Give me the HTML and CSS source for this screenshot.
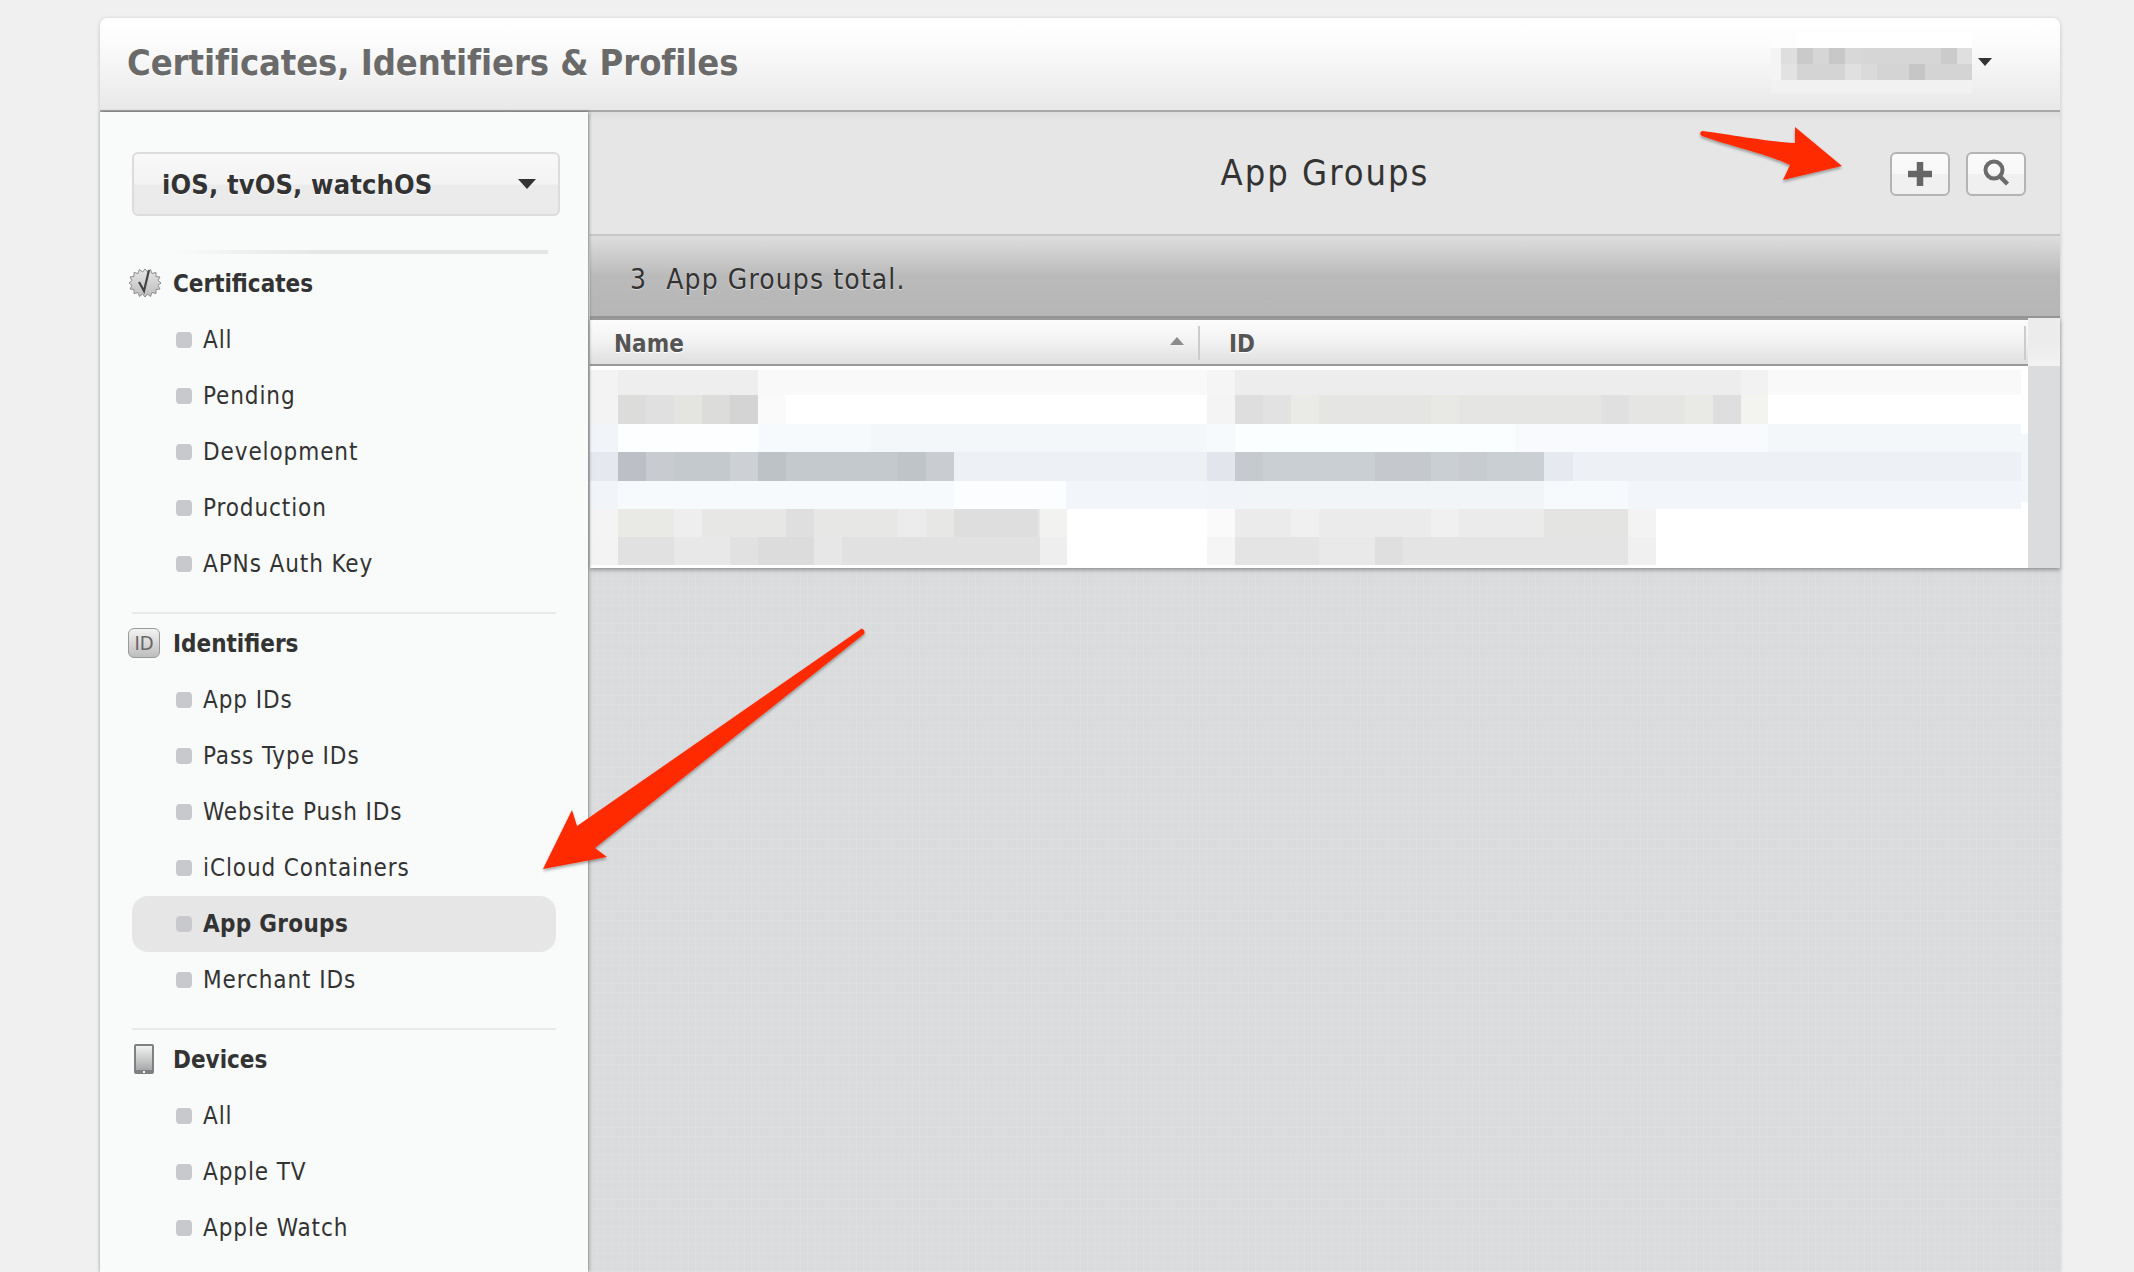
FILE: index.html
```html
<!DOCTYPE html>
<html lang="en">
<head>
  <meta charset="UTF-8">
  <title>Certificates, Identifiers &amp; Profiles</title>
  <link rel="stylesheet" href="styles.css">
</head>
<body>
  <div class="app">
    <header class="topbar">
      <h1>Certificates, Identifiers &amp; Profiles</h1>
      <div class="account">
        <svg class="user-blur" width="201" height="61" viewBox="1771 32 201 61" shape-rendering="crispEdges">
          <rect x="1771" y="32" width="201" height="16" fill="#fdfdfd"/>
          <rect x="1797" y="32" width="175" height="16" fill="#ffffff"/>
          <rect x="1771" y="48" width="10" height="32" fill="#f4f4f4"/>
          <rect x="1781" y="48" width="191" height="16" fill="#d6d6d6"/>
          <rect x="1781" y="48" width="16" height="16" fill="#dedede"/>
          <rect x="1797" y="48" width="16" height="16" fill="#cacaca"/>
          <rect x="1829" y="48" width="16" height="16" fill="#c8c8c8"/>
          <rect x="1845" y="48" width="16" height="16" fill="#d8d8d8"/>
          <rect x="1941" y="48" width="16" height="16" fill="#cbcbcb"/>
          <rect x="1957" y="48" width="15" height="16" fill="#dfdfdf"/>
          <rect x="1781" y="64" width="191" height="16" fill="#d4d4d4"/>
          <rect x="1781" y="64" width="16" height="16" fill="#e2e2e2"/>
          <rect x="1845" y="64" width="16" height="16" fill="#e0e0e0"/>
          <rect x="1861" y="64" width="16" height="16" fill="#dadada"/>
          <rect x="1909" y="64" width="16" height="16" fill="#c6c6c6"/>
          <rect x="1771" y="80" width="201" height="13" fill="#f1f1f1"/>
        </svg>
        <span class="caret caret-small"></span>
      </div>
    </header>

    <div class="content">
      <nav class="sidebar">
        <div class="platform">
          <span>iOS, tvOS, watchOS</span>
          <span class="caret"></span>
        </div>
        <div class="fade-rule"></div>

        <section class="group">
          <h2 class="group-title">
            <svg class="group-icon" width="32" height="32" viewBox="0 0 32 32">
              <defs>
                <linearGradient id="badge" x1="0" y1="0" x2="0" y2="1">
                  <stop offset="0" stop-color="#e6e6e6"/>
                  <stop offset="1" stop-color="#bdbdbd"/>
                </linearGradient>
              </defs>
              <polygon points="16,2 18.500,5 21.500,2.500 23,6.500 27,5.500 27,9.500 31,10 29,13.500 32,16 29,18.500 31,22 27,22.500 27,26.500 23,25.500 21.500,29.500 18.500,27 16,30 13.500,27 10.500,29.500 9,25.500 5,26.500 5,22.500 1,22 3,18.500 0,16 3,13.500 1,10 5,9.500 5,5.500 9,6.500 10.500,2.500 13.500,5" fill="url(#badge)" stroke="#8c8c8c" stroke-width="1"/>
              <path d="M10 15 L15 24 L20 3" fill="none" stroke="#444" stroke-width="2.200"/>
            </svg>
            Certificates
          </h2>
          <ul class="links">
            <li>All</li>
            <li>Pending</li>
            <li>Development</li>
            <li>Production</li>
            <li>APNs Auth Key</li>
          </ul>
        </section>

        <section class="group">
          <h2 class="group-title">
            <span class="id-badge">ID</span>
            Identifiers
          </h2>
          <ul class="links">
            <li>App IDs</li>
            <li>Pass Type IDs</li>
            <li>Website Push IDs</li>
            <li>iCloud Containers</li>
            <li class="active">App Groups</li>
            <li>Merchant IDs</li>
          </ul>
        </section>

        <section class="group">
          <h2 class="group-title">
            <svg class="group-icon" width="32" height="32" viewBox="0 0 32 32">
              <defs>
                <linearGradient id="screen" x1="0" y1="0" x2="0" y2="1">
                  <stop offset="0" stop-color="#f2f2f2"/>
                  <stop offset="1" stop-color="#a9a9a9"/>
                </linearGradient>
              </defs>
              <rect x="5" y="1" width="20" height="30" rx="2" fill="#7f8084"/>
              <rect x="7" y="3" width="16" height="24" fill="url(#screen)"/>
              <rect x="14" y="28" width="2" height="2" fill="#fff"/>
            </svg>
            Devices
          </h2>
          <ul class="links">
            <li>All</li>
            <li>Apple TV</li>
            <li>Apple Watch</li>
          </ul>
        </section>
      </nav>

      <main class="main">
        <div class="toolbar">
          <h3>App Groups</h3>
          <div class="tools">
            <button class="tool" type="button" aria-label="Add">
              <svg width="28" height="28" viewBox="0 0 28 28"><path d="M14 2 V26 M2 14 H26" stroke="#666" stroke-width="6.500" fill="none"/></svg>
            </button>
            <button class="tool" type="button" aria-label="Search">
              <svg width="28" height="30" viewBox="0 0 28 30"><circle cx="12" cy="11" r="8.500" fill="none" stroke="#6b6b6b" stroke-width="4"/><path d="M18 17.500 L25.500 25" stroke="#6b6b6b" stroke-width="4.500" fill="none"/></svg>
            </button>
          </div>
        </div>

        <div class="total"><span class="count">3</span> App Groups total.</div>

        <div class="list">
          <div class="list-table">
            <div class="list-head">
              <div class="col col-name">Name<span class="sort"></span></div>
              <div class="col col-id">ID</div>
            </div>
            <div class="list-body">
              <svg class="mosaic" width="1438" height="196" viewBox="590 370 1438 196" shape-rendering="crispEdges">
                <!-- row backgrounds -->
                <rect x="590" y="370" width="1431" height="25" fill="#f9f9f9"/>
                <rect x="590" y="395" width="1431" height="29" fill="#ffffff"/>
                <rect x="590" y="424" width="1431" height="28" fill="#f3f7fa"/>
                <rect x="590" y="452" width="1431" height="29" fill="#edf1f5"/>
                <rect x="590" y="481" width="1431" height="28" fill="#f2f6fa"/>
                <rect x="590" y="509" width="1431" height="56" fill="#ffffff"/>
                <rect x="2021" y="434" width="7" height="68" fill="#f3f6fa"/>
                <!-- name column -->
                <rect x="590" y="370" width="28" height="25" fill="#f3f3f3"/>
                <rect x="618" y="370" width="140" height="25" fill="#eeeeee"/>
                <rect x="590" y="395" width="28" height="29" fill="#f3f3f3"/>
                <rect x="618" y="395" width="140" height="29" fill="#dcdcdb"/>
                <rect x="646" y="395" width="28" height="29" fill="#e0e0e0"/>
                <rect x="674" y="395" width="28" height="29" fill="#e4e4e1"/>
                <rect x="730" y="395" width="28" height="29" fill="#d4d4d4"/>
                <rect x="758" y="395" width="28" height="29" fill="#fafafa"/>
                <rect x="590" y="424" width="28" height="28" fill="#f1f5f9"/>
                <rect x="618" y="424" width="140" height="28" fill="#fdfeff"/>
                <rect x="758" y="424" width="112" height="28" fill="#f7fafc"/>
                <rect x="590" y="452" width="28" height="29" fill="#e5e9ef"/>
                <rect x="618" y="452" width="336" height="29" fill="#c4c9cd"/>
                <rect x="618" y="452" width="28" height="29" fill="#bcc0c6"/>
                <rect x="646" y="452" width="28" height="29" fill="#c8ccd0"/>
                <rect x="730" y="452" width="28" height="29" fill="#cdd1d6"/>
                <rect x="758" y="452" width="28" height="29" fill="#bcc2c6"/>
                <rect x="898" y="452" width="28" height="29" fill="#bfc4c8"/>
                <rect x="926" y="452" width="28" height="29" fill="#c9cdd1"/>
                <rect x="590" y="481" width="28" height="28" fill="#f1f5f9"/>
                <rect x="618" y="481" width="336" height="28" fill="#f6fafc"/>
                <rect x="954" y="481" width="112" height="28" fill="#fbfdfe"/>
                <rect x="590" y="509" width="28" height="28" fill="#f4f4f4"/>
                <rect x="618" y="509" width="422" height="28" fill="#e7e7e6"/>
                <rect x="618" y="509" width="56" height="28" fill="#e9e9e6"/>
                <rect x="674" y="509" width="28" height="28" fill="#eeeeee"/>
                <rect x="786" y="509" width="28" height="28" fill="#dfdfdf"/>
                <rect x="898" y="509" width="28" height="28" fill="#ececec"/>
                <rect x="954" y="509" width="84" height="28" fill="#dedede"/>
                <rect x="1040" y="509" width="27" height="28" fill="#f2f2f0"/>
                <rect x="590" y="537" width="28" height="28" fill="#f3f3f3"/>
                <rect x="618" y="537" width="422" height="28" fill="#e1e1e1"/>
                <rect x="674" y="537" width="56" height="28" fill="#e8e8e8"/>
                <rect x="758" y="537" width="56" height="28" fill="#dcdcdc"/>
                <rect x="814" y="537" width="28" height="28" fill="#e7e7e7"/>
                <rect x="1040" y="537" width="27" height="28" fill="#eeeeee"/>
                <!-- id column -->
                <rect x="1207" y="370" width="28" height="25" fill="#f5f5f5"/>
                <rect x="1235" y="370" width="506" height="25" fill="#ededed"/>
                <rect x="1741" y="370" width="27" height="25" fill="#f2f2f2"/>
                <rect x="1207" y="395" width="28" height="29" fill="#f4f4f4"/>
                <rect x="1235" y="395" width="506" height="29" fill="#e5e5e3"/>
                <rect x="1235" y="395" width="28" height="29" fill="#dedede"/>
                <rect x="1263" y="395" width="28" height="29" fill="#e2e2e2"/>
                <rect x="1291" y="395" width="28" height="29" fill="#eaeae7"/>
                <rect x="1431" y="395" width="28" height="29" fill="#e8e8e4"/>
                <rect x="1601" y="395" width="28" height="29" fill="#e0e0e0"/>
                <rect x="1685" y="395" width="28" height="29" fill="#e9e9e5"/>
                <rect x="1713" y="395" width="28" height="29" fill="#dedede"/>
                <rect x="1741" y="395" width="27" height="29" fill="#f3f3f0"/>
                <rect x="1207" y="424" width="28" height="28" fill="#f7fafc"/>
                <rect x="1235" y="424" width="280" height="28" fill="#fbfeff"/>
                <rect x="1515" y="424" width="253" height="28" fill="#f9fafd"/>
                <rect x="1207" y="452" width="28" height="29" fill="#e2e6ec"/>
                <rect x="1235" y="452" width="309" height="29" fill="#cacfd3"/>
                <rect x="1235" y="452" width="28" height="29" fill="#c6cacf"/>
                <rect x="1375" y="452" width="56" height="29" fill="#c5c9ce"/>
                <rect x="1459" y="452" width="28" height="29" fill="#c8ccd1"/>
                <rect x="1544" y="452" width="29" height="29" fill="#e6eaf0"/>
                <rect x="1207" y="481" width="28" height="28" fill="#f1f5f9"/>
                <rect x="1235" y="481" width="309" height="28" fill="#f1f5f8"/>
                <rect x="1544" y="481" width="84" height="28" fill="#f6fafd"/>
                <rect x="1207" y="509" width="28" height="28" fill="#fafafa"/>
                <rect x="1235" y="509" width="393" height="28" fill="#ebebeb"/>
                <rect x="1291" y="509" width="28" height="28" fill="#f0f0f0"/>
                <rect x="1431" y="509" width="28" height="28" fill="#f0f0f0"/>
                <rect x="1544" y="509" width="84" height="28" fill="#e4e4e2"/>
                <rect x="1628" y="509" width="28" height="28" fill="#f3f3f3"/>
                <rect x="1207" y="537" width="28" height="28" fill="#f5f5f5"/>
                <rect x="1235" y="537" width="393" height="28" fill="#e4e4e4"/>
                <rect x="1319" y="537" width="56" height="28" fill="#e9e9e9"/>
                <rect x="1375" y="537" width="28" height="28" fill="#dfdfdf"/>
                <rect x="1628" y="537" width="28" height="28" fill="#f0f0f0"/>
              </svg>
            </div>
          </div>
          <div class="list-scroll"><div class="scroll-head"></div></div>
        </div>
        <div class="linen"></div>
      </main>
    </div>
  </div>

  <svg class="arrows" width="2134" height="1272" viewBox="0 0 2134 1272">
    <defs>
      <filter id="arrow-shadow" x="-20%" y="-20%" width="140%" height="140%">
        <feDropShadow dx="0" dy="2" stdDeviation="1.500" flood-color="#000" flood-opacity="0.350"/>
      </filter>
    </defs>
    <path filter="url(#arrow-shadow)" fill="#ff2c00" d="M1703 131 C1720 133 1770 142 1795 143 L1795 127 L1842 166 L1783 180 L1790 165 C1770 155 1730 146 1702 136 C1699 134 1700 131 1703 131 Z"/>
    <path filter="url(#arrow-shadow)" fill="#ff2c00" d="M861 629 C863 628 866 632 864 634 L595 848 L607 857 L543 869 L572 810 L577 826 Z"/>
  </svg>
</body>
</html>
```

FILE: styles.css
```css
* {
  box-sizing: border-box;
}
html, body {
  margin: 0;
  height: 100%;
}
body {
  background-color: #f0f0f0;
  font-family: "DejaVu Sans", "Open Sans", sans-serif;
  font-stretch: condensed;
  color: #333;
  overflow: hidden;
  padding: 18px 74px 0 100px;
}
.app {
  height: 1254px;
  display: flex;
  flex-direction: column;
  box-shadow: 0 1px 4px rgba(0, 0, 0, 0.2);
  border-radius: 8px 8px 0 0;
}

/* top bar */
.topbar {
  height: 94px;
  flex: none;
  display: flex;
  justify-content: space-between;
  background: linear-gradient(#ffffff, #fbfbfb 30%, #e8e8e8);
  border-bottom: 2px solid #a8a8a8;
  border-radius: 8px 8px 0 0;
  padding: 0 68px 0 27px;
}
.topbar h1 {
  margin: 0;
  font-size: 36px;
  font-weight: 700;
  letter-spacing: -0.08px;
  line-height: 90px;
  color: #6a6a6a;
  text-shadow: 0 1px 1px #fff;
}
.account {
  display: flex;
  align-items: flex-start;
  gap: 6px;
  padding-top: 14px;
}
.user-blur {
  display: block;
}
.caret {
  width: 0;
  height: 0;
  border-left: 9px solid transparent;
  border-right: 9px solid transparent;
  border-top: 10px solid #333;
}
.caret-small {
  border-left-width: 7px;
  border-right-width: 7px;
  border-top-width: 8px;
  margin-top: 26px;
}

.content {
  flex: 1;
  display: flex;
  min-height: 0;
}

/* sidebar */
.sidebar {
  width: 488px;
  flex: none;
  background-color: #f9fbfa;
  padding: 40px 32px 0;
  box-shadow: 1px 0 3px rgba(0, 0, 0, 0.5);
  position: relative;
  z-index: 1;
}
.platform {
  height: 64px;
  width: 428px;
  display: flex;
  align-items: center;
  justify-content: space-between;
  padding: 0 22px 0 28px;
  font-size: 27px;
  font-weight: 700;
  letter-spacing: 0.15px;
  color: #333;
  border: 2px solid #dcdcdc;
  border-radius: 6px;
  background: linear-gradient(#f8f8f8, #f3f3f3 50%, #ebebeb 52%, #eaeaea);
  text-shadow: 0 1px 1px #fff;
}
.fade-rule {
  height: 4px;
  margin: 34px 8px 0 40px;
  background: linear-gradient(to right, #f9fbfa, #e4e6e6 40%);
}
.group + .group {
  margin-top: 20px;
  border-top: 2px solid #e8eaea;
}
.group {
  width: 424px;
}
.group-title {
  margin: 0;
  height: 58px;
  display: flex;
  align-items: center;
  font-size: 24px;
  font-weight: 700;
  color: #333;
  position: relative;
  padding: 2px 0 0 41px;
}
.group-icon {
  position: absolute;
  left: -3px;
  top: 13px;
}
.id-badge {
  position: absolute;
  left: -4px;
  top: 14px;
  width: 32px;
  height: 30px;
  border: 1px solid #9a9a9a;
  border-radius: 6px;
  background: linear-gradient(#f3f3f3, #bdbdbd);
  color: #666;
  font-size: 20px;
  font-weight: 400;
  line-height: 28px;
  text-align: center;
}
.links {
  list-style: none;
  margin: 0;
  padding: 0;
}
.links li {
  height: 56px;
  line-height: 56px;
  font-size: 24px;
  letter-spacing: 0.9px;
  padding-left: 71px;
  position: relative;
}
.links li::before {
  content: "";
  position: absolute;
  left: 44px;
  top: 20px;
  width: 16px;
  height: 16px;
  border-radius: 4px;
  background-color: #c8c9cd;
}
.links li.active {
  font-weight: 700;
  letter-spacing: 0.3px;
  background-color: #e6e6e6;
  border-radius: 16px;
}

/* main */
.main {
  flex: 1;
  display: flex;
  flex-direction: column;
  margin-left: 2px;
  min-width: 0;
}
.toolbar {
  height: 124px;
  flex: none;
  display: flex;
  align-items: center;
  justify-content: center;
  position: relative;
  background: linear-gradient(#dcdcdc, #e6e6e6 8px);
  border-bottom: 2px solid #c8c8c8;
}
.toolbar h3 {
  margin: 0 0 2px;
  font-size: 36px;
  font-weight: 400;
  letter-spacing: 2px;
  color: #333;
}
.tools {
  position: absolute;
  right: 34px;
  top: 40px;
  display: flex;
  gap: 16px;
}
.tool {
  width: 60px;
  height: 44px;
  padding: 0;
  display: flex;
  align-items: center;
  justify-content: center;
  border: 2px solid #b4b4b4;
  border-radius: 6px;
  background: linear-gradient(#fafafa, #f8f8f8 50%, #f0f0f0 51%, #f0f0f0);
}
.total {
  height: 84px;
  flex: none;
  padding: 5px 0 0 40px;
  font-size: 28px;
  letter-spacing: 1.1px;
  line-height: 78px;
  color: #333;
  text-shadow: 0 1px 1px #ddd;
  background: linear-gradient(#dedede, #bababa 50%, #b6b6b6);
  border-bottom: 4px solid #999;
}
.count {
  margin-right: 10px;
}

/* list */
.list {
  flex: none;
  display: flex;
  height: 250px;
  margin-top: -2px;
  box-shadow: 0 2px 4px rgba(0, 0, 0, 0.35);
  position: relative;
}
.list-table {
  width: 1438px;
  flex: none;
  background-color: #fff;
}
.list-head {
  height: 48px;
  display: flex;
  align-items: center;
  padding-top: 2px;
  background: linear-gradient(#fcfcfc, #f2f2f2 50%, #dfdfdf);
  border-top: 2px solid #999;
  border-bottom: 2px solid #999;
  font-size: 24px;
  font-weight: 700;
  color: #555;
  text-shadow: 0 1px 0 #fff;
}
.col {
  height: 34px;
  line-height: 36px;
  position: relative;
  border-right: 2px solid #ccc;
}
.col-name {
  width: 610px;
  padding-left: 24px;
}
.col-id {
  width: 826px;
  padding-left: 29px;
}
.sort {
  position: absolute;
  right: 14px;
  top: 11px;
  width: 0;
  height: 0;
  border-left: 7px solid transparent;
  border-right: 7px solid transparent;
  border-bottom: 8px solid #8c8c8c;
}
.list-body {
  height: 202px;
  padding-top: 4px;
}
.mosaic {
  display: block;
}
.list-scroll {
  flex: 1;
  background-color: #dbdcde;
}
.scroll-head {
  height: 48px;
  background: linear-gradient(#ececec, #ececec 50%, #f2f2f2);
}
.linen {
  flex: 1;
  background-color: #dadbdd;
  background-image:
    repeating-linear-gradient(90deg, rgba(255, 255, 255, 0.09) 0 1px, transparent 1px 7px),
    repeating-linear-gradient(0deg, rgba(255, 255, 255, 0.08) 0 1px, transparent 1px 9px);
}

/* red annotation arrows, drawn on top of the page */
.arrows {
  position: absolute;
  left: 0;
  top: 0;
  z-index: 5;
  pointer-events: none;
}
```
